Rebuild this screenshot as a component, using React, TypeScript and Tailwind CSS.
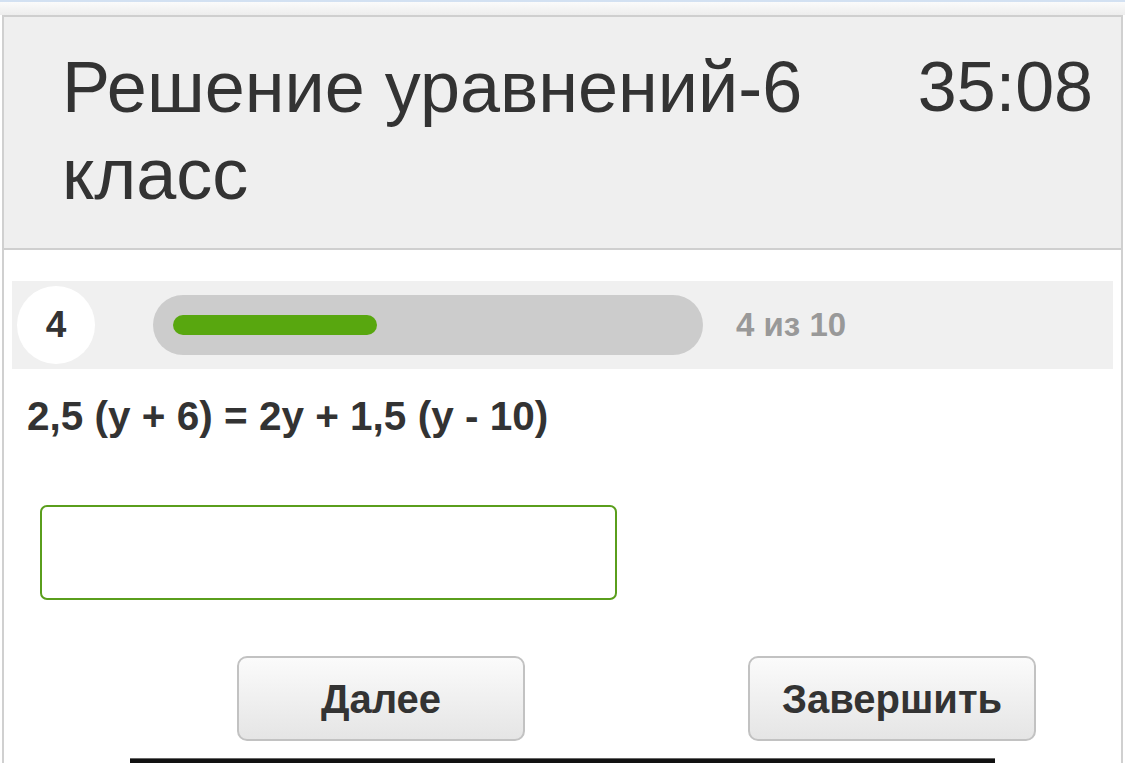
import React from "react";

const FONT = "font-['Liberation_Sans',Arial,sans-serif]";

function ProgressRow({ current, total }: { current: number; total: number }) {
  return (
    <div className="mx-[8px] mt-[31px] flex h-[88px] items-center bg-[#f0f0f0] pl-[5px]">
      <div className="flex h-[78px] w-[78px] items-center justify-center rounded-full bg-white text-[37px] font-bold text-[#333]">
        {current}
      </div>
      <div className="ml-[58px] flex h-[60px] w-[550px] items-center rounded-full bg-[#cccccc] px-[20px]">
        <div className="h-[20px] w-[204px] rounded-full bg-[#58a70f]" />
      </div>
      <span className="ml-[33px] text-[33px] font-bold text-[#999]">
        {current} из {total}
      </span>
    </div>
  );
}

function Btn({ children }: { children: React.ReactNode }) {
  return (
    <button className="flex h-[85px] w-[288px] items-center justify-center rounded-[10px] border-2 border-[#c2c2c2] bg-gradient-to-b from-[#fbfbfb] to-[#e5e5e5] text-[40px] font-bold text-[#333]">
      {children}
    </button>
  );
}

export default function App() {
  return (
    <div className={`relative h-[763px] w-[1125px] overflow-hidden bg-white ${FONT}`}>
      <div className="h-[2px] bg-[#d3e1f2]" />
      <div className="h-[13px] bg-gradient-to-b from-[#fbfbfb] to-[#ededed]" />
      <div className="ml-[2px] mr-[2px] h-[748px] border-x-2 border-[#d0d0d0]">
        <header className="flex h-[235px] items-start justify-between border-y-2 border-[#cfcfcf] bg-[#efefef] pl-[58px] pr-[28px]">
          <h1 className="mt-[27px] w-[780px] text-[72px] leading-[87px] font-normal text-[#333]">
            Решение уравнений-6 класс
          </h1>
          <div className="mt-[27px] text-[70px] leading-[87px] text-[#333]">35:08</div>
        </header>

        <ProgressRow current={4} total={10} />

        <p className="ml-[23px] mt-[24px] text-[40.5px] leading-[46px] font-bold text-[#333]">
          2,5 (y + 6) = 2y + 1,5 (y - 10)
        </p>

        <input
          type="text"
          className="ml-[36px] mt-[66px] block h-[95px] w-[577px] rounded-[7px] border-[2.5px] border-[#5a9e1c] bg-white outline-none"
        />

        <div className="ml-[233px] mt-[56px] flex gap-[223px]">
          <Btn>Далее</Btn>
          <Btn>Завершить</Btn>
        </div>
      </div>
      <div className="absolute bottom-0 left-[130px] h-[5px] w-[865px] border-t border-[#666] bg-[#111]" />
    </div>
  );
}
